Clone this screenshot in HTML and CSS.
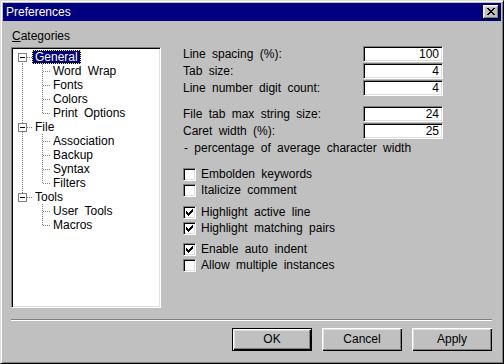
FILE: index.html
```html
<!DOCTYPE html>
<html>
<head>
<meta charset="utf-8">
<title>Preferences</title>
<link rel="stylesheet" href="styles.css">
</head>
<body>
<div class="window">
  <div class="titlebar">
    <span class="title">Preferences</span>
    <div class="close">
      <svg width="8" height="7" viewBox="0 0 8 7" shape-rendering="crispEdges"><path fill="#000" d="M0 0h2v1H0zM6 0h2v1H6zM1 1h2v1H1zM5 1h2v1H5zM2 2h4v1H2zM3 3h2v1H3zM2 4h4v1H2zM1 5h2v1H1zM5 5h2v1H5zM0 6h2v1H0zM6 6h2v1H6z"/></svg>
    </div>
  </div>
  <div class="body">
    <div class="main">
      <div class="cats">
        <div class="cats-label"><u>C</u>ategories</div>
        <div class="tree sunken">
          <div class="row"><div class="g1 v-down"><span class="box"></span><span class="hc"></span></div><span class="lbl sel">General</span></div>
          <div class="row"><div class="g1 v-full"></div><div class="g2"></div><span class="lbl">Word Wrap</span></div>
          <div class="row"><div class="g1 v-full"></div><div class="g2"></div><span class="lbl">Fonts</span></div>
          <div class="row"><div class="g1 v-full"></div><div class="g2"></div><span class="lbl">Colors</span></div>
          <div class="row"><div class="g1 v-full"></div><div class="g2 last"></div><span class="lbl">Print Options</span></div>
          <div class="row"><div class="g1 v-full"><span class="box"></span><span class="hc"></span></div><span class="lbl">File</span></div>
          <div class="row"><div class="g1 v-full"></div><div class="g2"></div><span class="lbl">Association</span></div>
          <div class="row"><div class="g1 v-full"></div><div class="g2"></div><span class="lbl">Backup</span></div>
          <div class="row"><div class="g1 v-full"></div><div class="g2"></div><span class="lbl">Syntax</span></div>
          <div class="row"><div class="g1 v-full"></div><div class="g2 last"></div><span class="lbl">Filters</span></div>
          <div class="row"><div class="g1 v-up"><span class="box"></span><span class="hc"></span></div><span class="lbl">Tools</span></div>
          <div class="row"><div class="g1"></div><div class="g2"></div><span class="lbl">User Tools</span></div>
          <div class="row"><div class="g1"></div><div class="g2 last"></div><span class="lbl">Macros</span></div>
        </div>
      </div>
      <div class="settings">
        <div class="grid">
          <span class="flabel">Line spacing (%):</span><div class="field sunken">100</div>
          <span class="flabel">Tab size:</span><div class="field sunken">4</div>
          <span class="flabel">Line number digit count:</span><div class="field sunken">4</div>
        </div>
        <div class="grid group">
          <span class="flabel">File tab max string size:</span><div class="field sunken">24</div>
          <span class="flabel">Caret width (%):</span><div class="field sunken">25</div>
        </div>
        <div class="note">- percentage of average character width</div>
        <div class="checks g-a">
          <div class="cb-row"><span class="cb sunken"></span>Embolden keywords</div>
          <div class="cb-row"><span class="cb sunken"></span>Italicize comment</div>
        </div>
        <div class="checks g-b">
          <div class="cb-row"><span class="cb sunken"><svg width="7" height="7" viewBox="0 0 7 7" shape-rendering="crispEdges"><path fill="#000" d="M6 0h1v1H6zM5 1h2v1H5zM0 2h1v1H0zM4 2h3v1H4zM0 3h2v1H0zM3 3h3v1H3zM0 4h5v1H0zM1 5h3v1H1zM2 6h1v1H2z"/></svg></span>Highlight active line</div>
          <div class="cb-row"><span class="cb sunken"><svg width="7" height="7" viewBox="0 0 7 7" shape-rendering="crispEdges"><path fill="#000" d="M6 0h1v1H6zM5 1h2v1H5zM0 2h1v1H0zM4 2h3v1H4zM0 3h2v1H0zM3 3h3v1H3zM0 4h5v1H0zM1 5h3v1H1zM2 6h1v1H2z"/></svg></span>Highlight matching pairs</div>
        </div>
        <div class="checks g-c">
          <div class="cb-row"><span class="cb sunken"><svg width="7" height="7" viewBox="0 0 7 7" shape-rendering="crispEdges"><path fill="#000" d="M6 0h1v1H6zM5 1h2v1H5zM0 2h1v1H0zM4 2h3v1H4zM0 3h2v1H0zM3 3h3v1H3zM0 4h5v1H0zM1 5h3v1H1zM2 6h1v1H2z"/></svg></span>Enable auto indent</div>
          <div class="cb-row"><span class="cb sunken"></span>Allow multiple instances</div>
        </div>
      </div>
    </div>
    <div class="sep"></div>
    <div class="buttons">
      <div class="btn default">OK</div>
      <div class="btn">Cancel</div>
      <div class="btn">Apply</div>
    </div>
  </div>
</div>
</body>
</html>
```
FILE: styles.css
```css
* { box-sizing: border-box; }
html, body { margin: 0; padding: 0; }
body {
  font: 12px "Liberation Sans", Arial, sans-serif;
  word-spacing: 3px;
  color: #000;
  background: #c0c0c0;
}
.window {
  width: 504px;
  height: 364px;
  border: 1px solid;
  border-color: #dfdfdf #000 #000 #dfdfdf;
  box-shadow: inset 1px 1px #fff, inset -1px -1px #808080;
  padding: 2px;
  display: flex;
  flex-direction: column;
  background: #c0c0c0;
}
.titlebar {
  height: 18px;
  flex: none;
  background: #000080;
  color: #fff;
  display: flex;
  align-items: center;
  justify-content: space-between;
  padding: 0 2px 0 3px;
}
.title { font-size: 12px; line-height: 14px; }
.close {
  width: 16px;
  height: 14px;
  background: #c0c0c0;
  box-shadow: inset -1px -1px #000, inset 1px 1px #fff, inset -2px -2px #808080, inset 2px 2px #dfdfdf;
  display: flex;
  align-items: center;
  justify-content: center;
  padding: 0 1px 1px 0;
}
.close svg { display: block; }
.body {
  flex: 1;
  padding: 8px 9px 10px 8px;
  display: flex;
  flex-direction: column;
}
.main { display: flex; height: 279px; flex: none; }
.cats { width: 150px; flex: none; display: flex; flex-direction: column; }
.cats-label { height: 14px; line-height: 14px; margin-bottom: 4px; padding-left: 1px; }
.sunken {
  border: 1px solid;
  border-color: #808080 #fff #fff #808080;
  box-shadow: inset 1px 1px #000, inset -1px -1px #dfdfdf;
  background: #fff;
}
.tree { height: 261px; padding: 2px 1px 1px 1px; }
.row { display: flex; height: 14px; align-items: center; }
.g1 {
  width: 19px;
  height: 14px;
  flex: none;
  display: flex;
  align-items: center;
}
.v-full { background: repeating-linear-gradient(#808080 0 1px, transparent 1px 2px) 9px 0 / 1px 100% no-repeat; }
.v-down { background: repeating-linear-gradient(#808080 0 1px, transparent 1px 2px) 9px 7px / 1px 7px no-repeat; }
.v-up { background: repeating-linear-gradient(#808080 0 1px, transparent 1px 2px) 9px 0 / 1px 7px no-repeat; }
.box {
  width: 9px;
  height: 9px;
  margin-left: 5px;
  border: 1px solid #808080;
  background: linear-gradient(#000, #000) center / 5px 1px no-repeat, #fff;
}
.hc {
  width: 5px;
  height: 1px;
  background: repeating-linear-gradient(to right, #808080 0 1px, transparent 1px 2px);
}
.g2 {
  width: 18px;
  height: 14px;
  flex: none;
  background:
    repeating-linear-gradient(to right, #808080 0 1px, transparent 1px 2px) 11px 7px / 7px 1px no-repeat,
    repeating-linear-gradient(#808080 0 1px, transparent 1px 2px) 10px 0 / 1px 100% no-repeat;
}
.g2.last {
  background:
    repeating-linear-gradient(to right, #808080 0 1px, transparent 1px 2px) 11px 7px / 7px 1px no-repeat,
    repeating-linear-gradient(#808080 0 1px, transparent 1px 2px) 10px 0 / 1px 8px no-repeat;
}
.lbl {
  height: 14px;
  line-height: 12px;
  border: 1px solid transparent;
  padding: 0 2px;
  white-space: nowrap;
}
.lbl.sel {
  background: #000080;
  color: #fff;
  border: 1px dotted #ffff00;
}
.settings { margin-left: 22px; padding-top: 17px; width: 260px; }
.grid {
  display: grid;
  grid-template-columns: 180px 80px;
  grid-auto-rows: 17px;
  align-items: start;
}
.grid.group { margin-top: 9px; }
.flabel { line-height: 16px; white-space: nowrap; }
.field {
  height: 16px;
  text-align: right;
  padding: 0 3px;
  line-height: 14px;
}
.note { height: 17px; line-height: 17px; padding-left: 1px; white-space: nowrap; }
.checks { display: flex; flex-direction: column; }
.g-a { margin-top: 9px; }
.g-b { margin-top: 6px; }
.g-c { margin-top: 5px; }
.cb-row { display: flex; align-items: center; height: 16px; white-space: nowrap; }
.cb {
  width: 13px;
  height: 13px;
  flex: none;
  margin-right: 5px;
  display: flex;
  align-items: center;
  justify-content: center;
}
.cb svg { display: block; }
.sep {
  margin-top: 11px;
  height: 2px;
  flex: none;
  border-top: 1px solid #808080;
  border-bottom: 1px solid #fff;
}
.buttons {
  margin-top: 7px;
  display: flex;
  justify-content: flex-end;
  gap: 10px;
}
.btn {
  width: 80px;
  height: 23px;
  background: #c0c0c0;
  box-shadow: inset 1px 1px #fff, inset -1px -1px #000, inset -2px -2px #808080, inset 2px 2px #dfdfdf;
  display: flex;
  align-items: center;
  justify-content: center;
  padding-bottom: 1px;
}
.btn.default {
  border: 1px solid #000;
}
```
